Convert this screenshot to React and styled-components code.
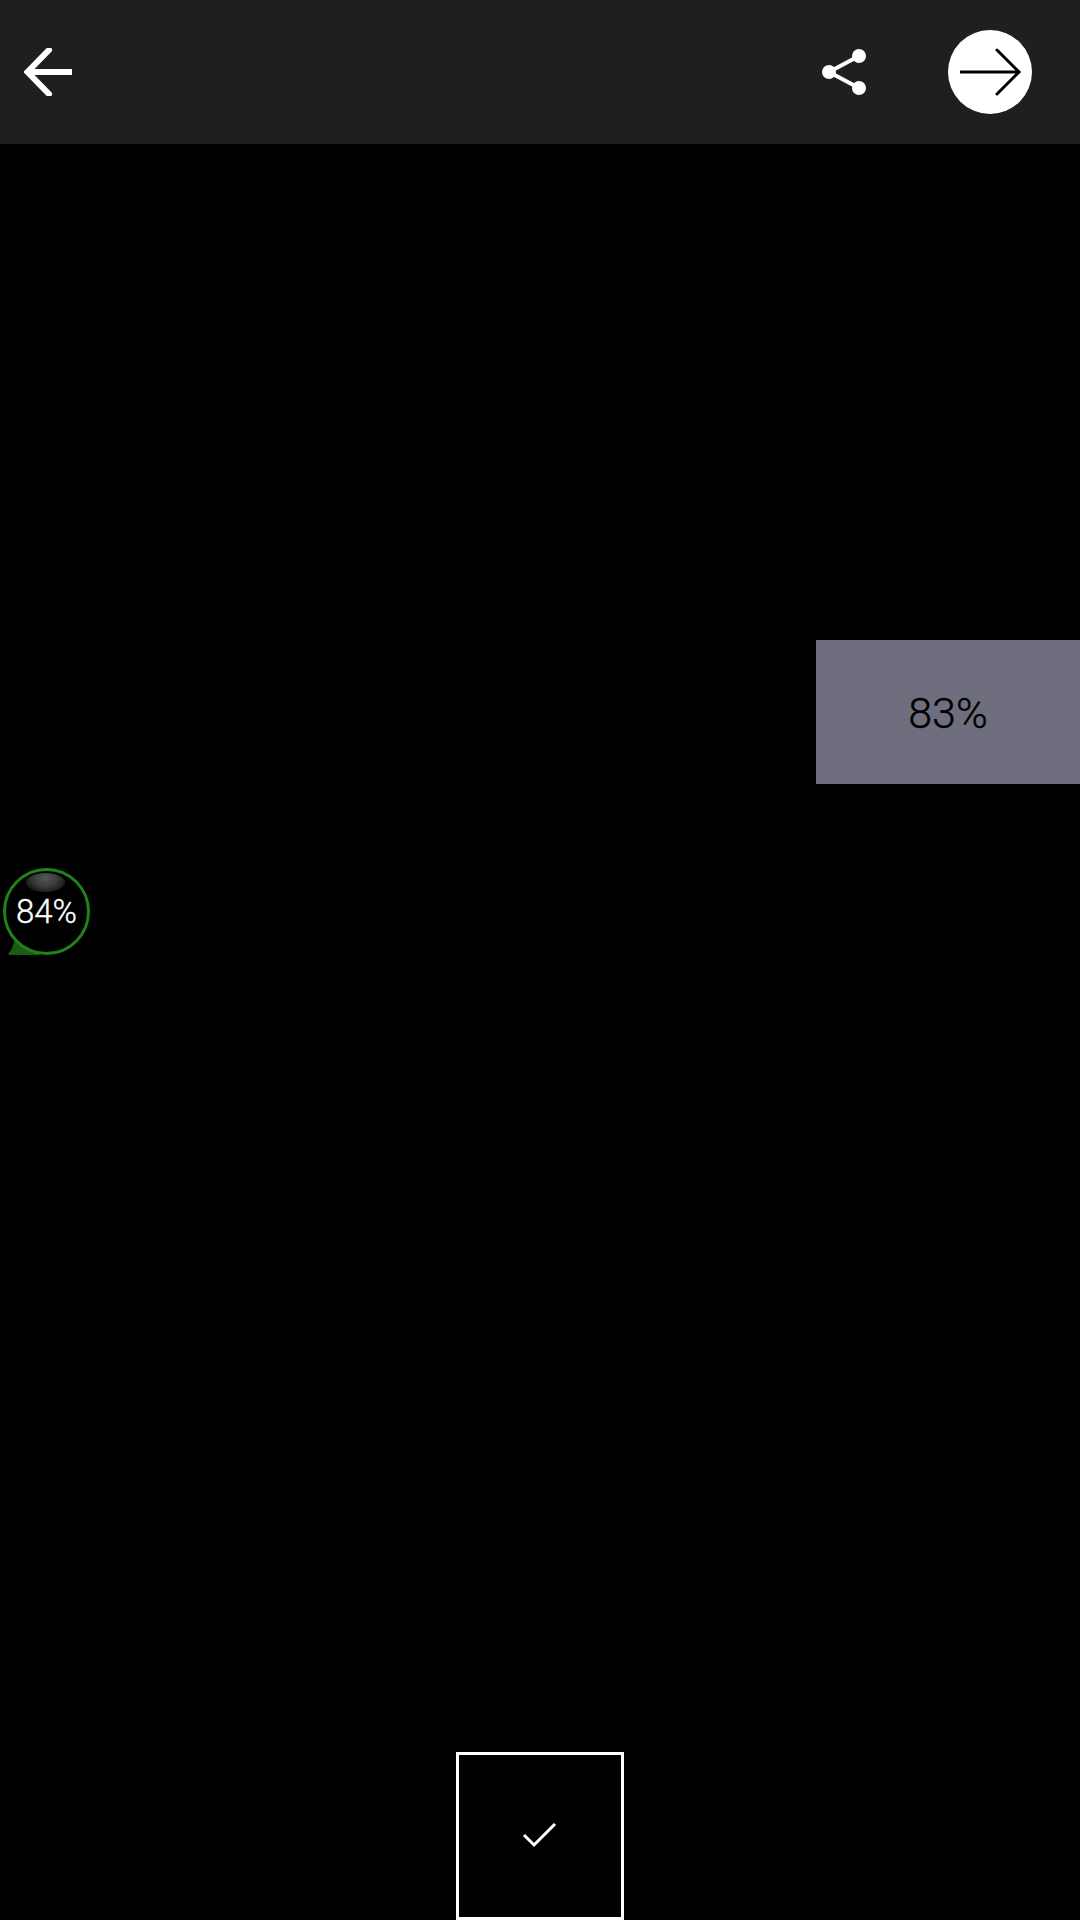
import styled, { createGlobalStyle } from "styled-components";

const GlobalStyle = createGlobalStyle`
  html, body {
    margin: 0;
    padding: 0;
    background: #000;
  }
`;

const Screen = styled.div`
  width: 1080px;
  height: 1920px;
  background: #000;
  display: flex;
  flex-direction: column;
  overflow: hidden;
  font-family: Roboto, "Liberation Sans", sans-serif;
  font-weight: 300;
  -webkit-text-stroke: 0.35px currentColor;
`;

const Header = styled.header`
  height: 144px;
  flex-shrink: 0;
  background: #1f1f1f;
  display: flex;
  align-items: center;
  padding: 0 48px 0 24px;
`;

const BackIcon = styled.svg`
  width: 48px;
  height: 48px;
  display: block;
`;

const HeaderActions = styled.div`
  margin-left: auto;
  display: flex;
  align-items: center;
  gap: 80px;
`;

const ShareIcon = styled.svg`
  width: 48px;
  height: 48px;
  display: block;
`;

const NextButton = styled.div`
  width: 84px;
  height: 84px;
  border-radius: 50%;
  background: #fff;
  display: flex;
  align-items: center;
  justify-content: center;
`;

const NextIcon = styled.svg`
  width: 84px;
  height: 84px;
  display: block;
`;

const ScorePanel = styled.div`
  align-self: flex-end;
  box-sizing: border-box;
  width: 264px;
  height: 144px;
  margin-top: 496px;
  padding-top: 2px;
  background: #6e6e7e;
  color: #000;
  font-size: 43px;
  display: flex;
  align-items: center;
  justify-content: center;
`;

const BubbleWrap = styled.div`
  position: relative;
  width: 87px;
  height: 87px;
  margin: 84px 0 0 3px;
`;

const BubbleTail = styled.svg`
  position: absolute;
  left: -3px;
  top: 60px;
  width: 50px;
  height: 30px;
`;

const Bubble = styled.div`
  position: relative;
  box-sizing: border-box;
  width: 100%;
  height: 100%;
  background: #000;
  border: 3.5px solid #1f8418;
  border-radius: 50%;
  color: #fff;
  font-size: 33px;
  display: flex;
  align-items: center;
  justify-content: center;
`;

const BubbleGloss = styled.div`
  position: absolute;
  top: 2px;
  left: 20px;
  width: 39px;
  height: 19px;
  border-radius: 50%;
  background: radial-gradient(ellipse at 50% 25%, #565656, #3a3a3a 45%, #0a0a0a 90%);
`;

const BubbleLabel = styled.span`
  position: relative;
`;

const ConfirmBox = styled.div`
  box-sizing: border-box;
  align-self: center;
  width: 168px;
  height: 168px;
  margin-top: auto;
  border: 3px solid #fff;
  display: flex;
  align-items: center;
  justify-content: center;
`;

const CheckIcon = styled.svg`
  width: 36px;
  height: 26px;
  display: block;
`;

export default function App() {
  return (
    <>
      <GlobalStyle />
      <Screen>
        <Header>
          <BackIcon viewBox="0 0 48 48" fill="none" stroke="#fff" strokeWidth="6">
            <path d="M48 24H4" />
            <path d="M25 2 3.5 24 25 46" strokeLinecap="round" />
          </BackIcon>
          <HeaderActions>
            <ShareIcon viewBox="0 0 48 48" fill="#fff" stroke="#fff">
              <path d="M39 8 9 24l30 16" fill="none" strokeWidth="4" />
              <circle cx="39" cy="8" r="7" strokeWidth="0" />
              <circle cx="9" cy="24" r="7" strokeWidth="0" />
              <circle cx="39" cy="40" r="7" strokeWidth="0" />
            </ShareIcon>
            <NextButton>
              <NextIcon viewBox="0 0 84 84" fill="none" stroke="#000" strokeWidth="3">
                <path d="M12 42h59" />
                <path d="m49 20 22 22-22 22" strokeLinecap="round" />
              </NextIcon>
            </NextButton>
          </HeaderActions>
        </Header>
        <ScorePanel>83%</ScorePanel>
        <BubbleWrap>
          <BubbleTail viewBox="0 0 50 30" fill="#1c5c12">
            <path d="M8 26Q13 21 15 10L40 27H10Z" />
          </BubbleTail>
          <Bubble>
            <BubbleGloss />
            <BubbleLabel>84%</BubbleLabel>
          </Bubble>
        </BubbleWrap>
        <ConfirmBox>
          <CheckIcon viewBox="0 0 36 26" fill="none" stroke="#fff" strokeWidth="3">
            <path d="m2 12 10 10L33 1" />
          </CheckIcon>
        </ConfirmBox>
      </Screen>
    </>
  );
}
